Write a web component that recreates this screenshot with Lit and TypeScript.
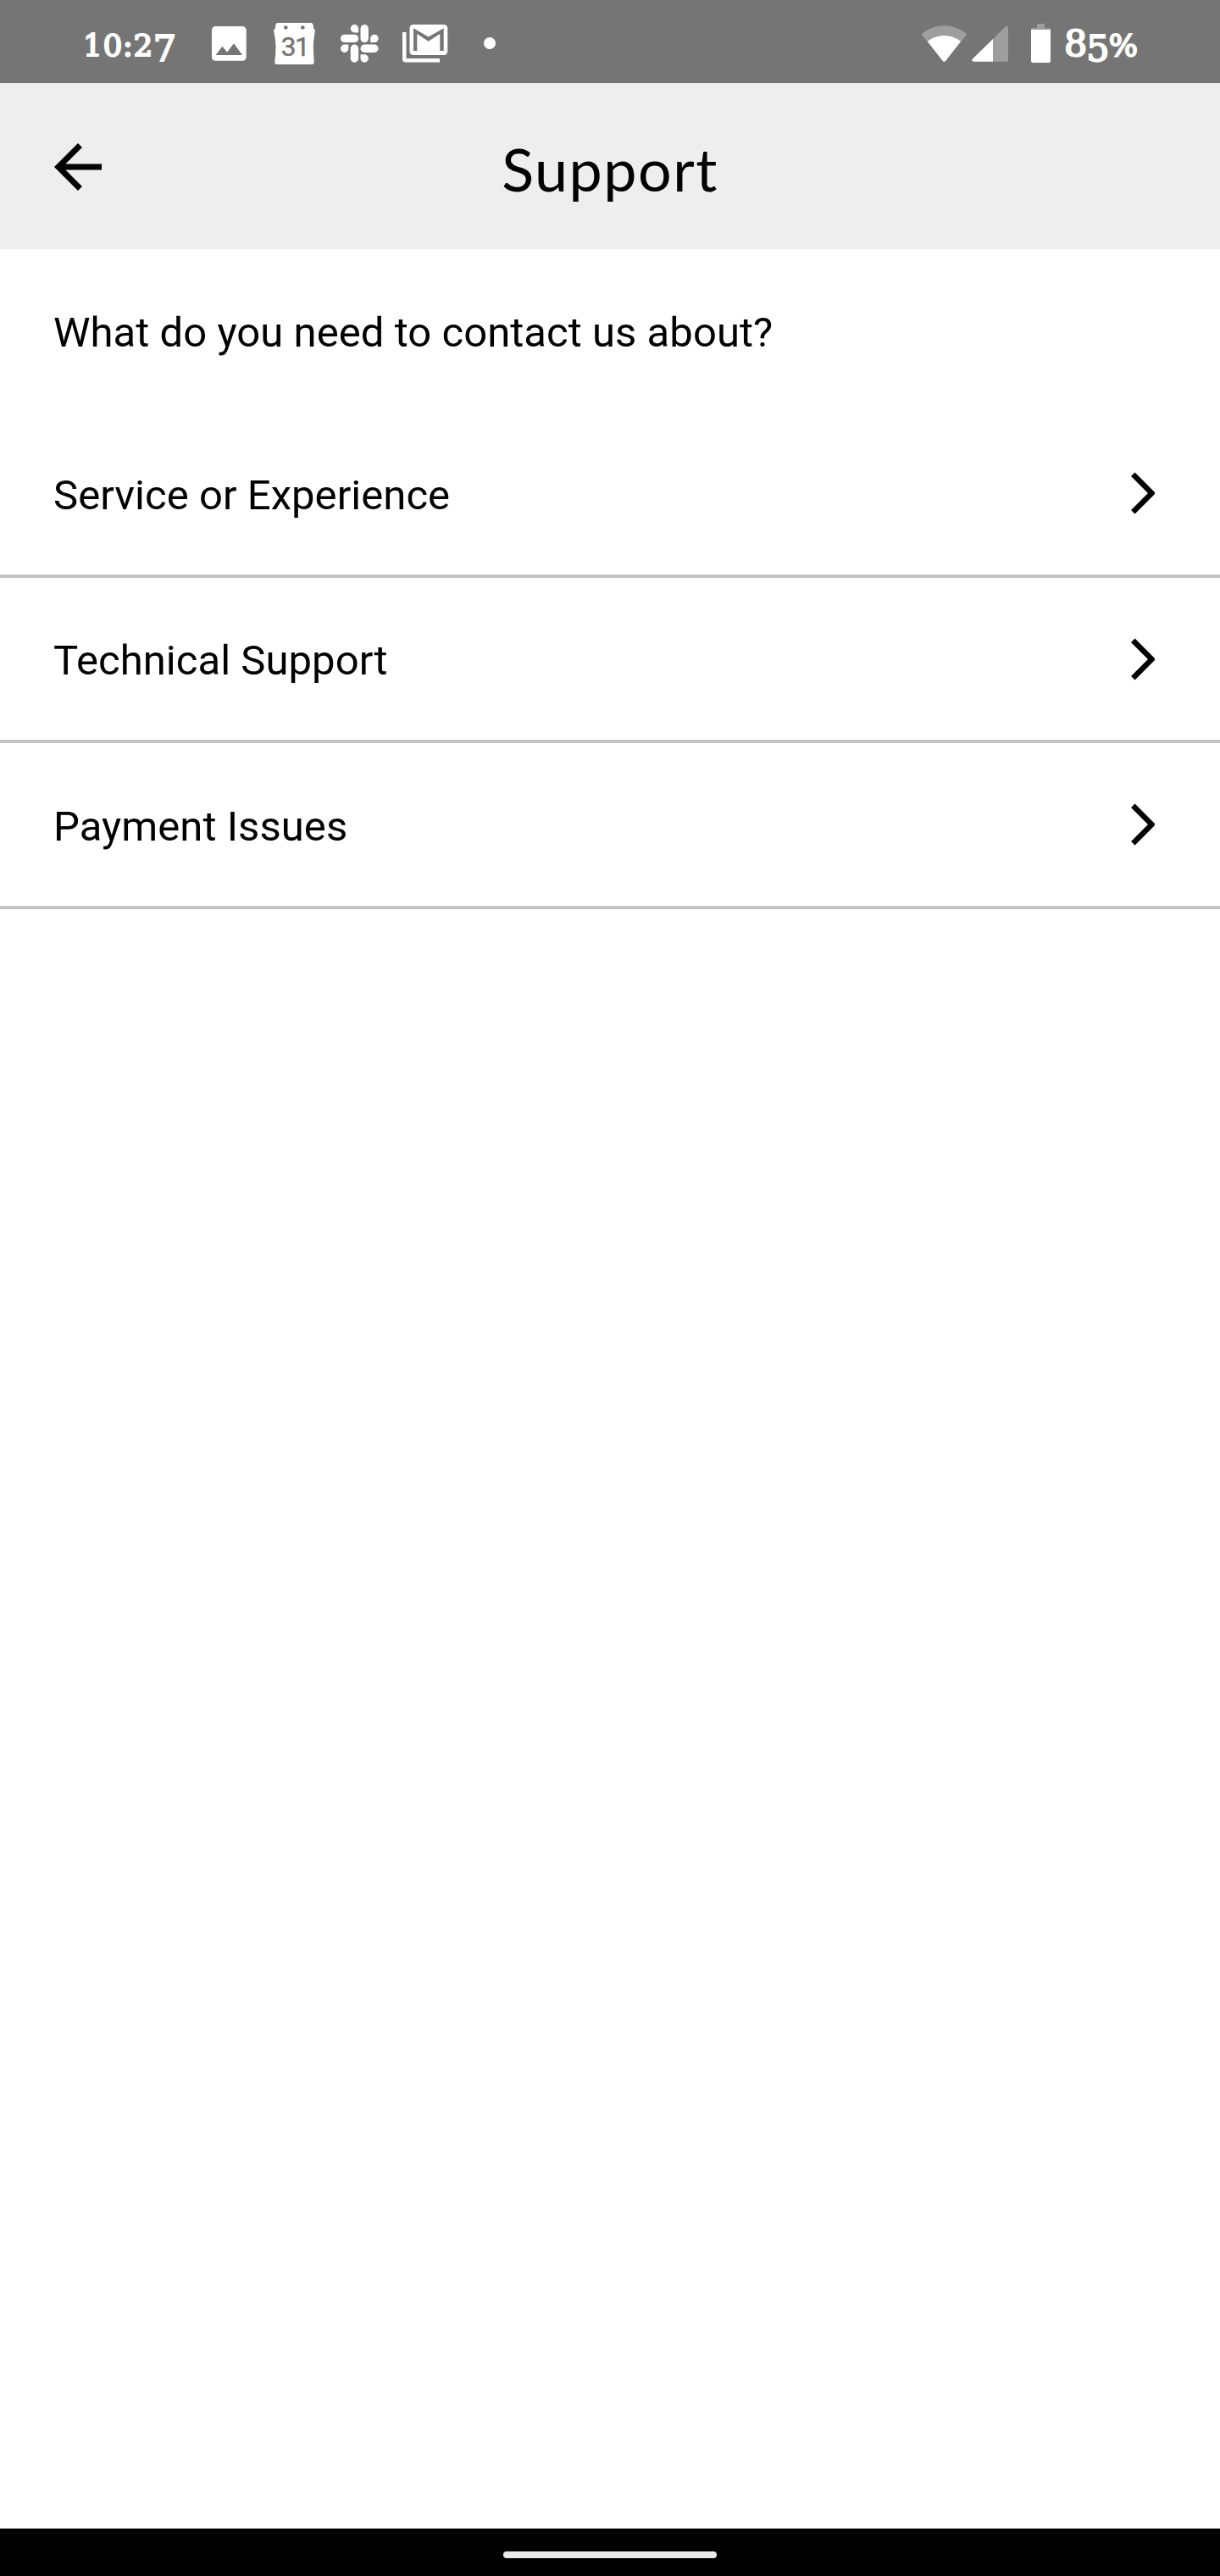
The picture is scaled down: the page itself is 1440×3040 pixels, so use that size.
import { LitElement, html, css } from "lit";
import { customElement, property } from "lit/decorators.js";

const SLACK =
  "M5.042 15.165a2.528 2.528 0 0 1-2.52 2.523A2.528 2.528 0 0 1 0 15.165a2.527 2.527 0 0 1 2.522-2.52h2.52v2.52zM6.313 15.165a2.527 2.527 0 0 1 2.521-2.52 2.527 2.527 0 0 1 2.521 2.52v6.313A2.528 2.528 0 0 1 8.834 24a2.528 2.528 0 0 1-2.521-2.522v-6.313zM8.834 5.042a2.528 2.528 0 0 1-2.521-2.52A2.528 2.528 0 0 1 8.834 0a2.528 2.528 0 0 1 2.521 2.522v2.52H8.834zM8.834 6.313a2.528 2.528 0 0 1 2.521 2.521 2.528 2.528 0 0 1-2.521 2.521H2.522A2.528 2.528 0 0 1 0 8.834a2.528 2.528 0 0 1 2.522-2.521h6.312zM18.956 8.834a2.528 2.528 0 0 1 2.522-2.521A2.528 2.528 0 0 1 24 8.834a2.528 2.528 0 0 1-2.522 2.521h-2.522V8.834zM17.688 8.834a2.528 2.528 0 0 1-2.523 2.521 2.527 2.527 0 0 1-2.52-2.521V2.522A2.527 2.527 0 0 1 15.165 0a2.528 2.528 0 0 1 2.523 2.522v6.312zM15.165 18.956a2.528 2.528 0 0 1 2.523 2.522A2.528 2.528 0 0 1 15.165 24a2.527 2.527 0 0 1-2.52-2.522v-2.522h2.52zM15.165 17.688a2.527 2.527 0 0 1-2.52-2.523 2.526 2.526 0 0 1 2.52-2.52h6.313A2.527 2.527 0 0 1 24 15.165a2.528 2.528 0 0 1-2.522 2.523h-6.313z";

@customElement("status-bar")
export class StatusBar extends LitElement {
  static styles = css`
    :host {
      display: flex;
      justify-content: space-between;
      height: 98px;
      flex: none;
      background: #757575;
      color: #fff;
      fill: #fff;
      font-family: "DejaVu Serif", serif;
    }
    .side {
      display: flex;
      align-items: flex-start;
    }
    .left {
      padding-left: 98px;
    }
    .right {
      padding-right: 98px;
    }
    svg {
      display: block;
      flex: none;
    }
    .label {
      white-space: nowrap;
      height: 98px;
      font-size: 36px;
      line-height: 108px;
      -webkit-text-stroke: 2px #fff;
    }
    .time {
      width: 146px;
      letter-spacing: 0.5px;
    }
    .charge {
      width: 86px;
    }
    .low,
    .tall {
      font-size: 43px;
      line-height: 0;
    }
    .low {
      vertical-align: -6px;
      letter-spacing: -1px;
    }
    .tall {
      letter-spacing: -1px;
    }
    .num {
      font: 400 31.5px Roboto, sans-serif;
      fill: #757575;
      stroke: #757575;
      stroke-width: 0.5px;
    }
    .dim {
      fill: #9e9e9e;
    }
    .cut {
      fill: #757575;
    }
  `;

  render() {
    return html`
      <div class="side left">
        <div class="label time">10:2<span class="low">7</span></div>
        <svg width="66" height="98" viewBox="244 0 66 98">
          <path transform="translate(243.2 24.2) scale(2.26)"
            d="M21 19V5c0-1.1-.9-2-2-2H5c-1.1 0-2 .9-2 2v14c0 1.1.9 2 2 2h14c1.1 0 2-.9 2-2zM8.5 13.5l2.5 3.01L14.5 12l4.5 6H5l3.5-4.5z" />
        </svg>
        <svg width="80" height="98" viewBox="310 0 80 98">
          <path d="M328 27H366.500Q369.500 27 369.700 30L370 33.500L372 35.500Q370 47 369.800 55Q370 63 370.700 73Q370.800 76 368 76H327Q324.200 76 324.300 73Q325.500 63 325.500 55Q325.300 47 323 35.500L325 33.500L325.200 30Q325.500 27 328 27Z" />
          <circle class="cut" cx="337.300" cy="32.500" r="2.300" />
          <circle class="cut" cx="357.300" cy="32.500" r="2.300" />
          <text class="num" x="331.800 348" y="66">31</text>
        </svg>
        <svg width="75" height="98" viewBox="390 0 75 98">
          <path transform="translate(402 29) scale(1.86)" d=${SLACK} />
        </svg>
        <svg width="85" height="98" viewBox="465 0 85 98">
          <path d="M475 38H479.500V69H519V73.500H479Q475 73.500 475 69.500Z" />
          <rect x="483.500" y="29" width="44.800" height="36" rx="4.500" />
          <path class="cut" d="M488 33.300L505.700 43.500L523.700 33.300V60H519.300V40L505.700 48.700L492.300 40V60H488Z" />
        </svg>
        <svg width="50" height="98" viewBox="550 0 50 98">
          <circle cx="578" cy="51" r="7" />
        </svg>
      </div>
      <div class="side right">
        <svg width="64" height="98" viewBox="1080 0 64 98">
          <path class="dim" d="M1088.300 41.500Q1087.600 40 1089 39A41 41 0 0 1 1139.800 39Q1141.300 40 1140.500 41.500L1116 72Q1114.400 73.500 1112.800 72Z" />
          <path d="M1094.800 48.800A31.500 31.500 0 0 1 1134 48.800L1116 72Q1114.400 73.500 1112.800 72Z" />
        </svg>
        <svg width="66" height="98" viewBox="1144 0 66 98">
          <path class="dim" d="M1172 46L1186.800 31.200Q1189.800 29.700 1190 32.500V71Q1189.800 72.700 1188 72.700H1172Z" />
          <path d="M1172 46V72.700H1149.500Q1146 72 1148 69.500Z" />
        </svg>
        <svg width="46" height="98" viewBox="1210 0 46 98">
          <path class="dim" d="M1224 28H1233V33H1238Q1240 33 1240 35V37H1217V35Q1217 33 1219 33H1224Z" />
          <path d="M1217 35H1240V71.500Q1240 74 1237.500 74H1219.500Q1217 74 1217 71.500Z" />
        </svg>
        <div class="label charge"><span class="tall">8</span><span class="low">5</span>%</div>
      </div>
    `;
  }
}

@customElement("support-row")
export class SupportRow extends LitElement {
  @property() label = "";

  static styles = css`
    :host {
      display: flex;
      align-items: center;
      justify-content: space-between;
      box-sizing: border-box;
      padding: 0 77px 0 63px;
      border-bottom: 4px solid #c4c4c4;
    }
    .label {
      padding-top: 4px;
    }
    svg {
      display: block;
    }
  `;

  render() {
    return html`
      <span class="label">${this.label}</span>
      <svg width="28" height="50" viewBox="0 0 28 50">
        <path d="M2.300 2.800L24.500 25L2.300 47.200" fill="none" stroke="#000" stroke-width="6.500" />
      </svg>
    `;
  }
}

@customElement("app-root")
export class AppRoot extends LitElement {
  private topics = ["Service or Experience", "Technical Support", "Payment Issues"];

  static styles = css`
    :host {
      display: flex;
      flex-direction: column;
      width: 1440px;
      height: 3040px;
      background: #fff;
      color: #000;
      font: 400 49px/57px Roboto, sans-serif;
      letter-spacing: 0.05px;
    }
    .header {
      display: grid;
      grid-template-columns: 134px 1fr 134px;
      align-items: center;
      height: 196px;
      flex: none;
      background: #eee;
    }
    .back {
      display: block;
      margin: 2px 0 0 50px;
    }
    .title {
      margin: 0;
      padding-top: 5px;
      text-align: center;
      font: 400 70px/84px Lato, sans-serif;
      letter-spacing: 1.5px;
    }
    .prompt {
      display: flex;
      align-items: center;
      box-sizing: border-box;
      padding: 4px 63px 0;
    }
    .content {
      flex: 1;
      display: grid;
      grid-template-rows: 192px 196px 195px 196px;
      align-content: start;
    }
    .nav {
      display: flex;
      align-items: center;
      justify-content: center;
      height: 56px;
      flex: none;
      background: #000;
    }
    .pill {
      width: 252px;
      height: 8px;
      margin-top: 6px;
      border-radius: 4px;
      background: #ebebeb;
    }
  `;

  render() {
    return html`
      <status-bar></status-bar>
      <header class="header">
        <svg class="back" width="84" height="84" viewBox="0 0 24 24">
          <path d="M20 11H7.830l5.590-5.590L12 4l-8 8 8 8 1.410-1.410L7.830 13H20v-2z" />
        </svg>
        <h1 class="title">Support</h1>
      </header>
      <main class="content">
        <div class="prompt">What do you need to contact us about?</div>
        ${this.topics.map((t) => html`<support-row .label=${t}></support-row>`)}
      </main>
      <footer class="nav"><div class="pill"></div></footer>
    `;
  }
}
